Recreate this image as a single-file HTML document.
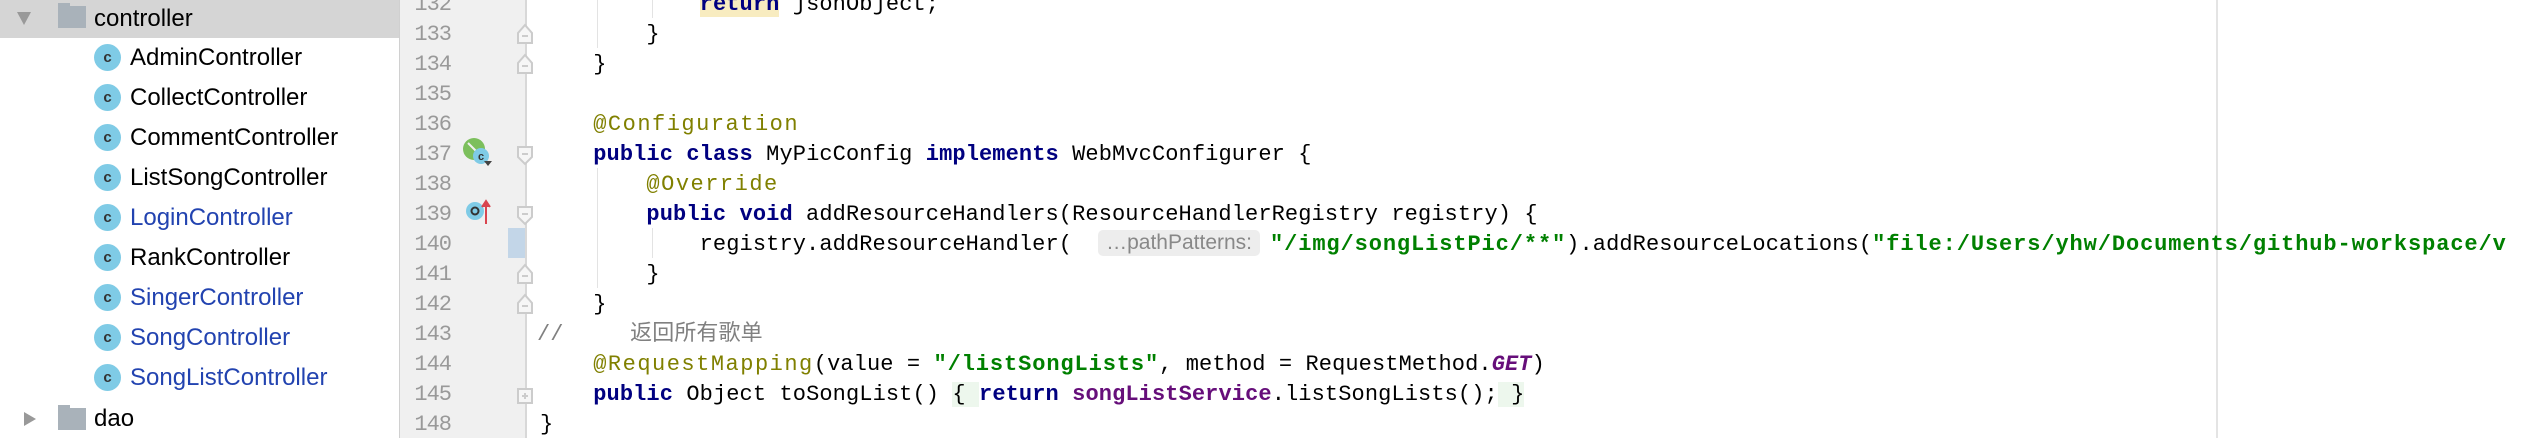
<!DOCTYPE html>
<html><head><meta charset="utf-8"><style>
body{margin:0;width:2530px;height:438px;overflow:hidden;background:#fff;position:relative;font-family:"Liberation Sans","Noto Sans CJK SC",sans-serif}
.sb{position:absolute;left:0;top:0;width:399px;height:438px;background:#fff;border-right:1px solid #d0d0d0}
.sel{position:absolute;left:0;top:0;width:399px;height:38px;background:#d5d5d5}
.it{position:absolute;font-size:24px;color:#000;line-height:40px;white-space:nowrap}
.blue{color:#2243b0}
.ci{position:absolute;width:27px;height:27px;border-radius:50%;background:#7fcbe6;color:#333;font:bold 15px "Liberation Sans",sans-serif;text-align:center;line-height:27px}
.gut{position:absolute;left:400px;top:0;width:125px;height:438px;background:#f0f0f0;border-right:2px solid #d8d8d8}
.ln{position:absolute;left:400px;width:51px;text-align:right;font:22px "Liberation Mono",monospace;color:#999;line-height:30px;letter-spacing:-1px}
.c{position:absolute;font:22px "Liberation Mono","Noto Sans CJK SC",monospace;letter-spacing:0.1px;line-height:30px;white-space:pre;color:#000}
.k{color:#000080;font-weight:bold}.a{color:#808000;letter-spacing:1.5px}.s{color:#008000;font-weight:bold;letter-spacing:0.9px}.f{color:#660e7a;font-weight:bold}
.hint{display:inline-block;background:#ededed;color:#888;font:21px "Liberation Sans",sans-serif;border-radius:5px;padding:0 8px;line-height:26px;vertical-align:1px;margin:0 10px 0 26px;letter-spacing:0}
.g{position:absolute;width:1px;background:#e3e3e3}
</style></head><body>
<div class="sb">
<div class="sel"></div>
<div style="position:absolute;left:17px;top:12px;width:0;height:0;border-left:7px solid transparent;border-right:7px solid transparent;border-top:13px solid #999"></div>
<div style="position:absolute;left:58px;top:6px;width:28px;height:22px;background:#a9b2ba"></div>
<div style="position:absolute;left:58px;top:3px;width:12px;height:5px;background:#a9b2ba"></div>
<div class="it" style="left:94px;top:-1px">controller</div>
<div class="ci" style="left:94px;top:44px">c</div><div class="it" style="left:130px;top:38px">AdminController</div>
<div class="ci" style="left:94px;top:84px">c</div><div class="it" style="left:130px;top:78px">CollectController</div>
<div class="ci" style="left:94px;top:124px">c</div><div class="it" style="left:130px;top:118px">CommentController</div>
<div class="ci" style="left:94px;top:164px">c</div><div class="it" style="left:130px;top:158px">ListSongController</div>
<div class="ci" style="left:94px;top:204px">c</div><div class="it blue" style="left:130px;top:198px">LoginController</div>
<div class="ci" style="left:94px;top:244px">c</div><div class="it" style="left:130px;top:238px">RankController</div>
<div class="ci" style="left:94px;top:284px">c</div><div class="it blue" style="left:130px;top:278px">SingerController</div>
<div class="ci" style="left:94px;top:324px">c</div><div class="it blue" style="left:130px;top:318px">SongController</div>
<div class="ci" style="left:94px;top:364px">c</div><div class="it blue" style="left:130px;top:358px">SongListController</div>
<div style="position:absolute;left:24px;top:412px;width:0;height:0;border-top:7px solid transparent;border-bottom:7px solid transparent;border-left:12px solid #999"></div>
<div style="position:absolute;left:58px;top:408px;width:28px;height:22px;background:#a9b2ba"></div>
<div style="position:absolute;left:58px;top:405px;width:12px;height:5px;background:#a9b2ba"></div>
<div class="it" style="left:94px;top:399px">dao</div>
</div>
<div class="gut"></div>
<div style="position:absolute;left:508px;top:228px;width:17px;height:30px;background:#c3d6e8"></div>
<div class="ln" style="top:-10px">132</div><div class="ln" style="top:20px">133</div><div class="ln" style="top:50px">134</div><div class="ln" style="top:80px">135</div><div class="ln" style="top:110px">136</div><div class="ln" style="top:140px">137</div><div class="ln" style="top:170px">138</div><div class="ln" style="top:200px">139</div><div class="ln" style="top:230px">140</div><div class="ln" style="top:260px">141</div><div class="ln" style="top:290px">142</div><div class="ln" style="top:320px">143</div><div class="ln" style="top:350px">144</div><div class="ln" style="top:380px">145</div><div class="ln" style="top:410px">148</div>
<svg style="position:absolute;left:460px;top:137px" width="34" height="30"><circle cx="14" cy="12" r="11" fill="#7cbf5c"/><path d="M8 6 L20 18" stroke="#f0f0f0" stroke-width="2"/><circle cx="21" cy="19" r="8" fill="#7fcbe6"/><text x="21" y="23" font-size="11" font-weight="bold" text-anchor="middle" fill="#333" font-family="Liberation Sans">c</text><path d="M24 24 L32 24 L28 29Z" fill="#444"/></svg>
<svg style="position:absolute;left:464px;top:197px" width="30" height="30"><circle cx="11" cy="14" r="9" fill="#7fcbe6"/><circle cx="11" cy="14" r="3.5" fill="none" stroke="#333" stroke-width="2"/><path d="M22 27 V5 M18 10 L22 4 L26 10" stroke="#d9454f" stroke-width="2" fill="#d9454f"/></svg>
<svg style="position:absolute;left:514px;top:0" width="22" height="438" fill="#f6f6f6" stroke="#ccc" stroke-width="2">
<path d="M4 43 V33 L11 25 L18 33 V43Z"/><path d="M8 36H14" />
<path d="M4 73 V63 L11 55 L18 63 V73Z"/><path d="M8 66H14"/>
<path d="M4 147 V157 L11 164 L18 157 V147Z"/><path d="M8 154H14"/>
<path d="M4 207 V217 L11 224 L18 217 V207Z"/><path d="M8 214H14"/>
<path d="M4 283 V273 L11 265 L18 273 V283Z"/><path d="M8 276H14"/>
<path d="M4 313 V303 L11 295 L18 303 V313Z"/><path d="M8 306H14"/>
<path d="M4 389 H18 V403 H4Z"/><path d="M8 396H14M11 393V399"/>
</svg>
<div class="g" style="left:597px;top:0;height:48px"></div>
<div class="g" style="left:652px;top:0;height:18px"></div>
<div class="g" style="left:597px;top:168px;height:120px"></div>
<div class="g" style="left:652px;top:228px;height:30px"></div>
<div style="position:absolute;left:2216px;top:0;width:2px;height:438px;background:#e4e4e4"></div>
<div class="c" style="left:540px;top:-10px">            <span class="k" style="background:#f8ecc0">return</span> jsonObject;</div>
<div class="c" style="left:540px;top:20px">        }</div>
<div class="c" style="left:540px;top:50px">    }</div>
<div class="c" style="left:540px;top:110px">    <span class="a">@Configuration</span></div>
<div class="c" style="left:540px;top:140px">    <span class="k">public class</span> MyPicConfig <span class="k">implements</span> WebMvcConfigurer {</div>
<div class="c" style="left:540px;top:170px">        <span class="a">@Override</span></div>
<div class="c" style="left:540px;top:200px">        <span class="k">public void</span> addResourceHandlers(ResourceHandlerRegistry registry) {</div>
<div class="c" style="left:540px;top:230px">            registry.addResourceHandler(<span class="hint">…pathPatterns:</span><span class="s">"/img/songListPic/**"</span>).addResourceLocations(<span class="s">"file:/Users/yhw/Documents/github-workspace/v</span></div>
<div class="c" style="left:540px;top:260px">        }</div>
<div class="c" style="left:540px;top:290px">    }</div>
<div class="c" style="left:537px;top:320px;color:#808080">//     返回所有歌单</div>
<div class="c" style="left:540px;top:350px">    <span class="a">@RequestMapping</span>(value = <span class="s">"/listSongLists"</span>, method = RequestMethod.<span class="f" style="font-style:italic">GET</span>)</div>
<div class="c" style="left:540px;top:380px">    <span class="k">public</span> Object toSongList() <span style="background:#edf7ed">{ </span><span class="k">return</span> <span class="f">songListService</span>.listSongLists();<span style="background:#edf7ed"> }</span></div>
<div class="c" style="left:540px;top:410px">}</div>
</body></html>
